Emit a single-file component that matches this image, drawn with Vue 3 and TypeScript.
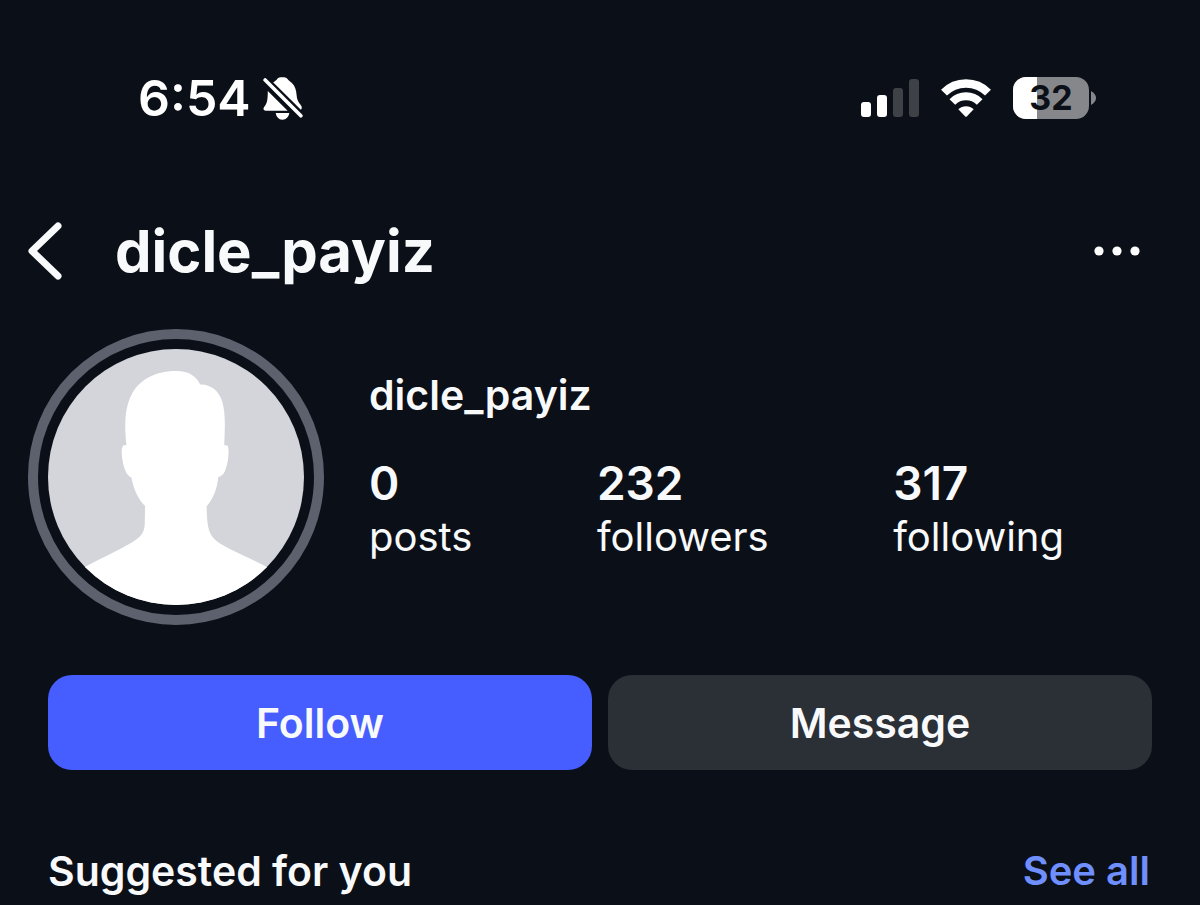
<script setup lang="ts">
import { ref } from 'vue'

interface Stat {
  value: number
  label: string
}

const username = 'dicle_payiz'
const clock = '6:54'
const batteryLevel = 32
const following = ref(false)

const stats: Stat[] = [
  { value: 0, label: 'posts' },
  { value: 232, label: 'followers' },
  { value: 317, label: 'following' },
]
</script>

<template>
  <main class="screen">
    <div class="status">
      <div class="status-left">
        <time class="clock">{{ clock }}</time>
        <svg class="bell" viewBox="0 0 120 130" role="img" aria-label="Silent mode">
          <path
            fill="#fff"
            d="M30 16 C35 13 39 10 43 5 C48 -1 68 -1 73 5 C77 11 82 13 87 18 C97 28 100 40 101 54 C102 68 106 76 113 84 C118 90 118 96 114 99 Z M14 42 L74 102 H8 C0 102 -1 95 4 89 C12 79 14 70 14 42 Z M38 109 H79 C77 121 70 129 58 129 C47 129 40 121 38 109 Z"
          />
          <path d="M6 9 L114 117" stroke="#0b0f17" stroke-width="22" />
          <path d="M6 9 L114 117" stroke="#fff" stroke-width="11" stroke-linecap="round" />
        </svg>
      </div>
      <div class="status-right">
        <svg class="signal" viewBox="0 0 58 38" role="img" aria-label="Signal strength">
          <rect x="0" y="23" width="10" height="15" rx="3" fill="#fff" />
          <rect x="16" y="16" width="10" height="22" rx="3" fill="#fff" />
          <rect x="32" y="9" width="10" height="29" rx="3" fill="#3e4145" />
          <rect x="48" y="0" width="10" height="38" rx="3" fill="#3e4145" />
        </svg>
        <svg class="wifi" viewBox="0 0 150 114" role="img" aria-label="Wi-Fi">
          <g fill="none" stroke="#fff">
            <path d="M9 41 A93 93 0 0 1 141 41" stroke-width="25" />
            <path d="M34 69 A58 58 0 0 1 116 69" stroke-width="24" />
          </g>
          <path d="M52 91 A33 33 0 0 1 98 91 L78 112 Q75 115 72 112 Z" fill="#fff" />
        </svg>
        <div class="battery" role="img" aria-label="Battery level">
          <span class="battery-body">
            <span class="battery-fill" :style="{ width: batteryLevel + '%' }"></span>
            <span class="battery-text">{{ batteryLevel }}</span>
          </span>
          <svg class="battery-tip" viewBox="0 0 5 14" aria-hidden="true">
            <path d="M0 0 Q5 3 5 7 Q5 11 0 14 Z" fill="#86878a" />
          </svg>
        </div>
      </div>
    </div>

    <header class="topbar">
      <button class="icon-button" type="button" aria-label="Back">
        <svg class="back" viewBox="0 0 34 58">
          <path d="M30 4 L4 29 L30 54" fill="none" stroke="#f8f9fb" stroke-width="7" stroke-linecap="round" stroke-linejoin="round" />
        </svg>
      </button>
      <h1 class="title">{{ username }}</h1>
      <button class="icon-button" type="button" aria-label="More options">
        <svg class="more" viewBox="0 0 46 10">
          <circle cx="5" cy="5" r="4.6" fill="#fff" />
          <circle cx="23" cy="5" r="4.6" fill="#fff" />
          <circle cx="41" cy="5" r="4.6" fill="#fff" />
        </svg>
      </button>
    </header>

    <section class="profile">
      <div class="ring">
        <svg class="avatar" viewBox="0 0 770 770" role="img" aria-label="Profile picture">
          <rect width="770" height="770" fill="#d4d5da" />
          <path
            fill="#fff"
            d="M100 662 C160 628 215 605 252 582 C282 564 289 552 291 527 L292 472 C272 454 257 420 251 387 C235 380 228 358 224 334 C221 316 220 300 226 290 L236 289 C229 228 231 177 251 138 C272 93 325 65 385 66 C425 66 446 82 458 107 C490 106 514 126 524 158 C535 195 532 242 530 289 L541 291 C546 310 542 344 532 368 C528 378 521 383 512 386 C509 422 496 451 477 474 L478 500 C480 535 484 555 501 572 C525 596 595 621 662 658 L770 770 H0 Z"
          />
        </svg>
      </div>
      <div class="info">
        <p class="name">{{ username }}</p>
        <ul class="stats">
          <li v-for="stat in stats" :key="stat.label">
            <a class="stat" href="#">
              <strong class="stat-value">{{ stat.value }}</strong>
              <span class="stat-label">{{ stat.label }}</span>
            </a>
          </li>
        </ul>
      </div>
    </section>

    <div class="actions">
      <button class="action primary" type="button" :aria-pressed="following" @click="following = !following">Follow</button>
      <button class="action" type="button">Message</button>
    </div>

    <section class="suggested">
      <h2 class="suggested-title">Suggested for you</h2>
      <a class="see-all" href="#">See all</a>
    </section>
  </main>
</template>

<style>
body {
  margin: 0;
  background: #0b0f17;
}
</style>

<style scoped>
.screen {
  box-sizing: border-box;
  min-height: 100vh;
  padding-top: 68px;
  background: #0b0f17;
  color: #f8f9fb;
  font-family: Inter, "Liberation Sans", sans-serif;
  font-size: 41px;
  line-height: 48px;
}
.status,
.status-left,
.status-right,
.battery,
.topbar,
.profile,
.actions,
.suggested {
  display: flex;
  align-items: center;
}
.status {
  justify-content: space-between;
  height: 60px;
  padding: 0 104px 0 138px;
}
.status-left {
  gap: 12px;
}
.clock {
  font-size: 50px;
  font-weight: 600;
  color: #fff;
}
.bell {
  width: 40px;
  height: 43px;
}
.status-right {
  gap: 22px;
}
.signal {
  width: 58px;
  height: 38px;
}
.wifi {
  width: 50px;
  height: 38px;
}
.battery {
  gap: 2px;
}
.battery-body {
  position: relative;
  width: 76px;
  height: 42px;
  border-radius: 13px;
  overflow: hidden;
  background: #86878a;
}
.battery-fill {
  position: absolute;
  inset: 0 auto 0 0;
  background: #fff;
}
.battery-text {
  position: relative;
  display: block;
  color: #0b0f17;
  font-size: 34px;
  font-weight: 700;
  line-height: 42px;
  text-align: center;
}
.battery-tip {
  width: 5px;
  height: 14px;
}
.topbar {
  height: 80px;
  margin-top: 83px;
  padding: 0 60px 0 28px;
}
.icon-button {
  display: flex;
  padding: 0;
  border: 0;
  background: none;
  cursor: pointer;
}
.back {
  width: 34px;
  height: 58px;
}
.more {
  width: 46px;
  height: 10px;
}
.title {
  flex: 1;
  margin: 0 0 0 53px;
  font-size: 58px;
  font-weight: 700;
  line-height: 80px;
}
.profile {
  align-items: flex-start;
  gap: 45px;
  margin-top: 38px;
  padding: 0 136px 0 28px;
}
.ring {
  flex: none;
  padding: 10px;
  border: 10px solid #5d616d;
  border-radius: 50%;
}
.avatar {
  display: block;
  width: 256px;
  height: 256px;
  border-radius: 50%;
}
.info {
  flex: 1;
  padding-top: 42px;
}
.name {
  margin: 0;
  font-weight: 600;
}
.stats {
  display: flex;
  justify-content: space-between;
  margin: 37px 0 0;
  padding: 0;
  list-style: none;
}
.stat {
  display: flex;
  flex-direction: column;
  color: inherit;
  line-height: 54px;
  text-decoration: none;
}
.stat-value {
  font-size: 46px;
  font-weight: 600;
}
.stat-label {
  font-size: 40px;
}
.actions {
  gap: 16px;
  margin-top: 50px;
  padding: 0 48px;
}
.action {
  flex: 1;
  height: 95px;
  border: 0;
  border-radius: 24px;
  background: #2b2f36;
  color: inherit;
  font: inherit;
  font-weight: 600;
  cursor: pointer;
}
.primary {
  background: #465eff;
}
.suggested {
  justify-content: space-between;
  margin-top: 77px;
  padding: 0 50px 0 48px;
}
.suggested-title {
  margin: 0;
  font-size: 41px;
  font-weight: 600;
}
.see-all {
  color: #6f8fff;
  font-size: 40px;
  font-weight: 600;
  text-decoration: none;
}
</style>
